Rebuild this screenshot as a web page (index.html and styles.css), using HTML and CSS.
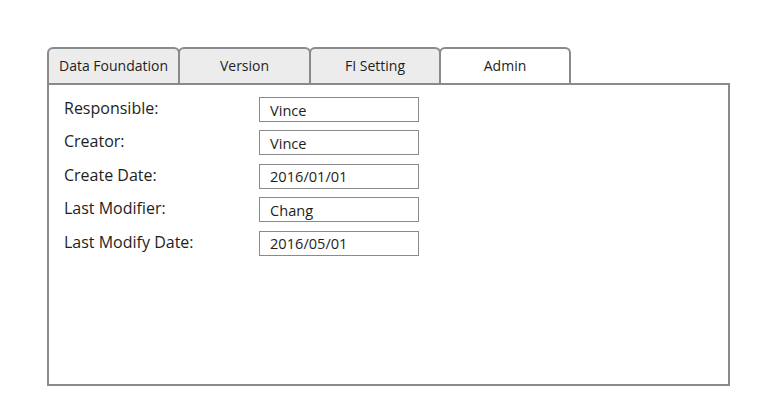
FILE: index.html
```html
<!DOCTYPE html>
<html>
<head>
<meta charset="utf-8">
<link rel="stylesheet" href="styles.css">
</head>
<body>
<div class="page">
  <div class="tabs">
    <div class="tab tab-wide">Data Foundation</div>
    <div class="tab tab-wide">Version</div>
    <div class="tab">FI Setting</div>
    <div class="tab active">Admin</div>
  </div>
  <div class="panel">
    <div class="form">
      <div class="label">Responsible:</div>
      <div class="field">Vince</div>
      <div class="label">Creator:</div>
      <div class="field">Vince</div>
      <div class="label">Create Date:</div>
      <div class="field">2016/01/01</div>
      <div class="label">Last Modifier:</div>
      <div class="field">Chang</div>
      <div class="label">Last Modify Date:</div>
      <div class="field">2016/05/01</div>
    </div>
  </div>
</div>
</body>
</html>
```
FILE: styles.css
```css
html, body {
  margin: 0;
  padding: 0;
  background: #ffffff;
}
body {
  font-family: "Open Sans", "Noto Sans", sans-serif;
  color: #1e1e1e;
}
.page {
  padding: 47px 0 0 47px;
}
.tabs {
  display: flex;
  height: 36px;
}
.tab {
  box-sizing: border-box;
  width: 132px;
  height: 36px;
  border: 2px solid #8a8a8a;
  border-bottom: none;
  border-radius: 6px 6px 0 0;
  background: #ececec;
  font-size: 14px;
  display: flex;
  align-items: center;
  justify-content: center;
  padding-bottom: 1px;
}
.tab + .tab {
  margin-left: -2px;
}
.tab-wide {
  width: 133px;
}
.tab.active {
  background: #ffffff;
}
.panel {
  box-sizing: border-box;
  width: 683px;
  height: 303px;
  border: 2px solid #8a8a8a;
  padding: 12px 15px;
}
.form {
  display: grid;
  grid-template-columns: 195px 160px;
  row-gap: 8.4px;
  align-items: center;
}
.label {
  font-size: 16px;
  margin-top: -3px;
}
.field {
  box-sizing: border-box;
  height: 25px;
  border: 1px solid #8a8a8a;
  font-size: 14.6px;
  padding-left: 10px;
  display: flex;
  align-items: center;
}
```
